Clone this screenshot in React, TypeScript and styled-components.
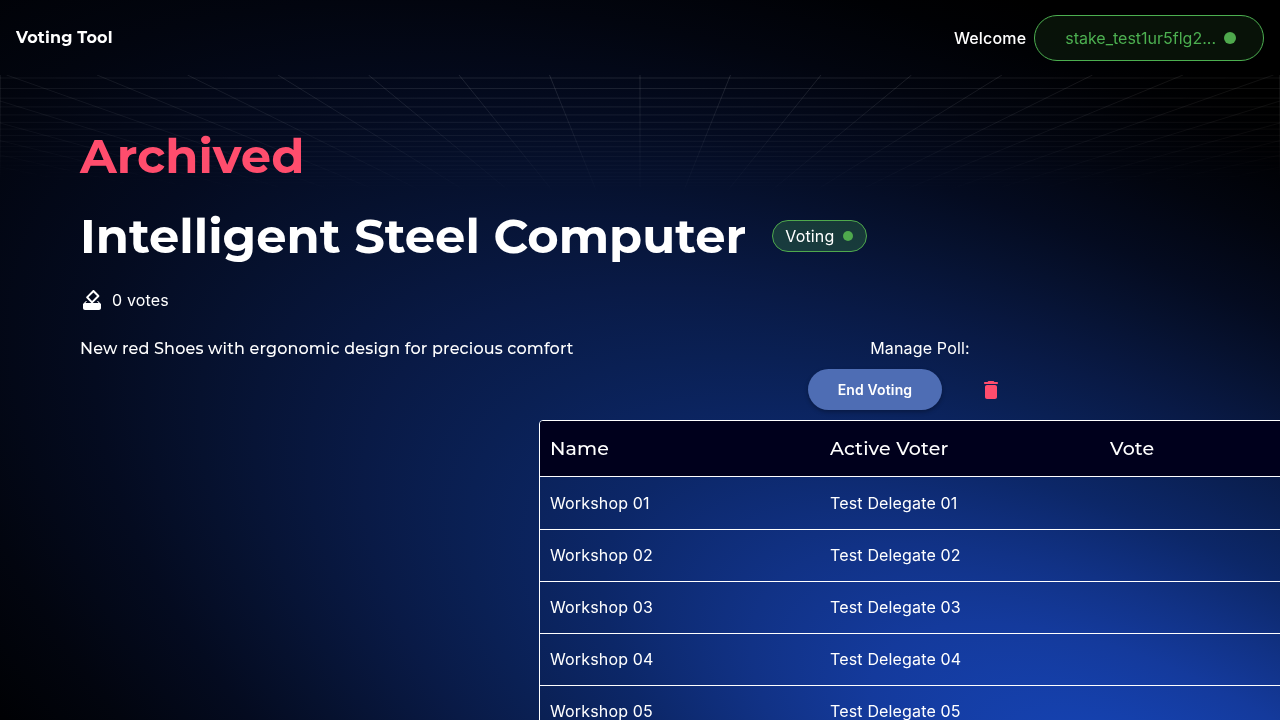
import React from 'react';
import styled, { createGlobalStyle } from 'styled-components';

const display = '"Montserrat", "Inter", "Open Sans", sans-serif';
const text = '"Inter", "Roboto", sans-serif';

const GlobalStyle = createGlobalStyle`
  * { box-sizing: border-box; }
  html { background: #000; }
  body {
    margin: 0;
    color: #fff;
    font-family: ${text};
    font-size: 16px;
    line-height: 24px;
    letter-spacing: 0.01em;
    overflow-x: hidden;
  }
  h1, h2, p { margin: 0; }
`;

const Page = styled.div`
  position: relative;
  min-height: 100vh;
  overflow: hidden;
`;

const Backdrop = styled.svg`
  position: fixed;
  inset: 0;
  width: 100%;
  height: 100%;
  z-index: -1;
`;

const Header = styled.header`
  display: flex;
  align-items: center;
  justify-content: space-between;
  padding: 15px 16px 14px;
`;

const Brand = styled.a`
  color: #fff;
  font-family: ${display};
  font-weight: 700;
  text-decoration: none;
`;

const Account = styled.div`
  display: flex;
  align-items: center;
  gap: 8px;
  font-weight: 500;
`;

const WalletButton = styled.button`
  display: flex;
  align-items: center;
  gap: 8px;
  height: 46px;
  padding: 0 27px 0 30px;
  border: 1px solid #4caf50;
  border-radius: 23px;
  background: rgba(76, 175, 80, 0.1);
  color: #4caf50;
  font: 400 16px/24px ${text};
  cursor: pointer;
`;

const Dot = styled.span<{ $size: number }>`
  width: ${(p) => p.$size}px;
  height: ${(p) => p.$size}px;
  border-radius: 50%;
  background: #4fa94d;
`;

const Main = styled.main`
  padding: 53px 80px 0;
`;

const Title = styled.h1<{ $color?: string }>`
  color: ${(p) => p.$color ?? '#fff'};
  font-family: ${display};
  font-size: 48px;
  line-height: 56px;
  font-weight: 700;
  letter-spacing: normal;
`;

const TitleRow = styled.div`
  display: flex;
  align-items: center;
  gap: 26px;
  margin-top: 24px;
`;

const Status = styled.span`
  display: flex;
  align-items: center;
  gap: 9px;
  height: 32px;
  padding: 0 13px 0 12px;
  border: 1px solid #4fa94d;
  border-radius: 16px;
  background: rgba(76, 175, 80, 0.25);
`;

const Votes = styled.div`
  display: flex;
  align-items: center;
  gap: 8px;
  margin-top: 24px;
`;

const Columns = styled.div`
  display: grid;
  grid-template-columns: 1fr 1fr;
  margin-top: 24px;
`;

const Description = styled.p`
  font-family: ${display};
  font-weight: 500;
  line-height: 26px;
`;

const Manage = styled.section`
  display: flex;
  flex-direction: column;
  align-items: center;
  gap: 9px;
`;

const Actions = styled.div`
  display: flex;
  align-items: center;
  gap: 8px;
`;

const EndButton = styled.button`
  height: 41px;
  padding: 0 30px;
  border: 0;
  border-radius: 21px;
  background: #4e6db4;
  box-shadow: 0 2px 4px rgba(0, 0, 0, 0.3);
  color: #fff;
  font: 600 14px/24px ${text};
  letter-spacing: 0.01em;
  cursor: pointer;
`;

const DeleteButton = styled.button`
  display: flex;
  padding: 8px 29px;
  border: 0;
  background: none;
  color: #ff4d6d;
  cursor: pointer;
`;

const TableFrame = styled.div`
  width: 842px;
  margin: 10px 0 0 calc(50% - 101px);
  border: 1px solid #fff;
  border-radius: 4px;
  overflow: hidden;
`;

const Table = styled.table`
  width: 100%;
  table-layout: fixed;
  border-collapse: separate;
  border-spacing: 0;
  text-align: left;
`;

const HeadCell = styled.th`
  height: 56px;
  padding: 0 10px;
  border-bottom: 1px solid #fff;
  background: #00001c;
  font-family: ${display};
  font-size: 19px;
  font-weight: 500;
`;

const Row = styled.tr`
  height: 52px;
  &:first-child { height: 53px; }
`;

const Cell = styled.td`
  padding: 0 10px;
  border-bottom: 1px solid #fff;
  tr + tr > & { padding-bottom: 1px; }
`;

const Icon = ({ path }: { path: string }) => (
  <svg width="24" height="24" viewBox="0 0 24 24" fill="currentColor" aria-hidden="true">
    <path d={path} />
  </svg>
);

const BALLOT =
  'M18 13h-1l1.6 2H5.4L7 13H6l-3 3v4c0 1.1.89 2 1.99 2H19c1.1 0 2-.89 2-2v-4l-3-3zm-1-5.05-4.95 4.95-3.54-3.54 4.95-4.95L17 7.95zm-4.24-5.66L6.39 8.66c-.39.39-.39 1.02 0 1.41l4.95 4.95c.39.39 1.02.39 1.41 0l6.36-6.36c.39-.39.39-1.02 0-1.41L14.16 2.3c-.38-.4-1.01-.4-1.4-.01z';
const TRASH =
  'M6 19c0 1.1.9 2 2 2h8c1.1 0 2-.9 2-2V9c0-1.1-.9-2-2-2H8c-1.1 0-2 .9-2 2v10zM18 4h-2.5l-.71-.71c-.18-.18-.44-.29-.7-.29H9.91c-.26 0-.52.11-.7.29L8.5 4H6c-.55 0-1 .45-1 1s.45 1 1 1h12c.55 0 1-.45 1-1s-.45-1-1-1z';

// The floor grid recedes towards a horizon point below the header.
const HORIZON = 299;
const gridRows = Array.from({ length: 20 }, (_, k) => HORIZON - 1 / (0.004525 + 0.000227 * k));
const gridRays = Array.from({ length: 33 }, (_, k) => k - 16);

const Background = () => (
  <Backdrop viewBox="0 0 1280 720" preserveAspectRatio="none" aria-hidden="true">
    <defs>
      <radialGradient
        id="glow"
        gradientUnits="userSpaceOnUse"
        cx="0"
        cy="0"
        r="1"
        gradientTransform="translate(1170 820) rotate(28) scale(1650 690)"
      >
        <stop offset="0" stopColor="#1745b8" />
        <stop offset="0.1" stopColor="#1541ae" />
        <stop offset="0.2" stopColor="#143a9c" />
        <stop offset="0.28" stopColor="#113286" />
        <stop offset="0.38" stopColor="#0c2768" />
        <stop offset="0.47" stopColor="#0a2054" />
        <stop offset="0.54" stopColor="#091a46" />
        <stop offset="0.65" stopColor="#06112e" />
        <stop offset="0.72" stopColor="#040b20" />
        <stop offset="0.83" stopColor="#02050f" />
        <stop offset="0.93" stopColor="#000104" />
        <stop offset="1" stopColor="#000" />
      </radialGradient>
      <radialGradient
        id="fade"
        gradientUnits="userSpaceOnUse"
        cx="0"
        cy="0"
        r="1"
        gradientTransform="translate(640 60) scale(1300 140)"
      >
        <stop offset="0" stopColor="#fff" />
        <stop offset="1" stopColor="#000" />
      </radialGradient>
      <mask id="gridMask" maskUnits="userSpaceOnUse" x="0" y="75" width="1280" height="115">
        <rect x="0" y="75" width="1280" height="115" fill="url(#fade)" />
      </mask>
    </defs>
    <rect width="1280" height="720" fill="url(#glow)" />
    <g mask="url(#gridMask)" stroke="#fff" strokeOpacity="0.13" fill="none">
      {gridRows.map((y) => (
        <path key={y} d={`M0 ${y}H1280`} />
      ))}
      {gridRays.map((k) => (
        <path key={k} d={`M${640 + k * 90.5} 75L640 ${HORIZON}`} />
      ))}
      <path d="M0.5 75V190M1279.5 75V190" />
    </g>
  </Backdrop>
);

const delegates = ['01', '02', '03', '04', '05', '06'];

export default function App() {
  return (
    <Page>
      <GlobalStyle />
      <Background />
      <Header>
        <Brand href="#">Voting Tool</Brand>
        <Account>
          <span>Welcome</span>
          <WalletButton type="button">
            stake_test1ur5flg2...
            <Dot $size={12} />
          </WalletButton>
        </Account>
      </Header>
      <Main>
        <Title as="h2" $color="#ff4d6d">Archived</Title>
        <TitleRow>
          <Title>Intelligent Steel Computer</Title>
          <Status>
            Voting
            <Dot $size={10} />
          </Status>
        </TitleRow>
        <Votes>
          <Icon path={BALLOT} />
          <span>0 votes</span>
        </Votes>
        <Columns>
          <Description>New red Shoes with ergonomic design for precious comfort</Description>
          <Manage>
            <p>Manage Poll:</p>
            <Actions>
              <EndButton type="button">End Voting</EndButton>
              <DeleteButton type="button" aria-label="Delete poll">
                <Icon path={TRASH} />
              </DeleteButton>
            </Actions>
          </Manage>
        </Columns>
        <TableFrame>
          <Table>
            <thead>
              <tr>
                <HeadCell scope="col">Name</HeadCell>
                <HeadCell scope="col">Active Voter</HeadCell>
                <HeadCell scope="col">Vote</HeadCell>
              </tr>
            </thead>
            <tbody>
              {delegates.map((n) => (
                <Row key={n}>
                  <Cell>Workshop {n}</Cell>
                  <Cell>Test Delegate {n}</Cell>
                  <Cell />
                </Row>
              ))}
            </tbody>
          </Table>
        </TableFrame>
      </Main>
    </Page>
  );
}
